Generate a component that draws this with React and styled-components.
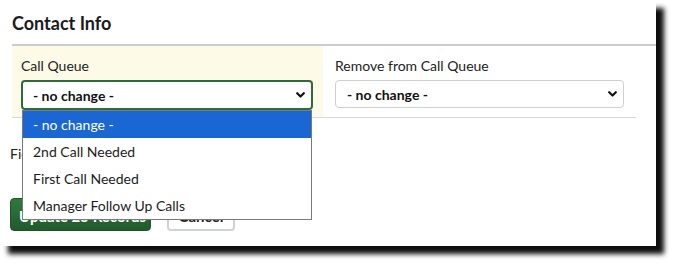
import React from 'react';
import styled, { createGlobalStyle } from 'styled-components';

const GlobalStyle = createGlobalStyle`
  html, body {
    margin: 0;
    padding: 0;
    background: #fff;
    font-family: "Lato", "Liberation Sans", sans-serif;
    color: #222;
  }
`;

const Page = styled.div`
  width: 675px;
  height: 264px;
  overflow: hidden;
  background: #fff;
`;

const Panel = styled.div`
  position: relative;
  width: 656px;
  height: 246px;
  background: #fff;
  box-shadow: 8px 8px 5px rgba(0, 0, 0, 0.95);
  box-sizing: border-box;
`;

const Header = styled.div`
  margin-left: 12px;
  height: 44px;
  border-bottom: 2px solid #c9cdd2;
  display: flex;
  align-items: center;
`;

const Title = styled.h2`
  margin: 0;
  font-size: 18px;
  font-weight: 700;
  color: #1b1b1b;
  padding-top: 2px;
`;

const FieldRow = styled.div`
  display: grid;
  grid-template-columns: 311px 313px;
  margin-left: 12px;
  width: 624px;
  border-bottom: 1px solid #d8d8d8;
`;

const Cell = styled.div`
  position: relative;
  background: ${p => (p.$active ? '#fdfbe7' : '#fff')};
  padding: 10px ${p => (p.$active ? '10px' : '12px')} 7px ${p => (p.$active ? '9px' : '12px')};
`;

const Label = styled.div`
  font-size: 14px;
  line-height: 20px;
  margin-bottom: 4px;
  color: #222;
`;

const SelectBox = styled.div`
  height: ${p => (p.$focused ? '30px' : '28px')};
  margin-top: ${p => (p.$focused ? '0' : '1px')};
  box-sizing: border-box;
  border: ${p => (p.$focused ? '2px solid #2f6a3c' : '1px solid #cfcfcf')};
  border-radius: 4px;
  background: #fff;
  display: flex;
  align-items: center;
  justify-content: space-between;
  padding: 0 6px 0 ${p => (p.$focused ? '10px' : '11px')};
  font-size: 14px;
  font-weight: 700;
  color: #111;
`;

const Chevron = () => (
  <svg width="9" height="6" viewBox="0 0 9 6">
    <path d="M1.2 1.2 L4.5 4.5 L7.8 1.2" fill="none" stroke="#111" strokeWidth="2.2" strokeLinecap="round" strokeLinejoin="round" />
  </svg>
);

const OptionList = styled.ul`
  position: absolute;
  left: 10px;
  top: 64px;
  width: 290px;
  margin: 0;
  padding: 0;
  list-style: none;
  border: 1px solid #7a7a7a;
  background: #fff;
  box-sizing: border-box;
  z-index: 5;
`;

const OptionItem = styled.li`
  height: 27px;
  line-height: 27px;
  padding-left: 10px;
  font-size: 14px;
  white-space: nowrap;
  background: ${p => (p.$selected ? '#1a66d2' : '#fff')};
  color: ${p => (p.$selected ? '#fff' : '#1c1c1c')};
`;

const Body = styled.div`
  padding: 26px 10px 0;
`;

const Note = styled.div`
  font-size: 14px;
  line-height: 20px;
  color: #222;
  white-space: nowrap;
`;

const Actions = styled.div`
  display: flex;
  gap: 16px;
  margin-top: 34px;
`;

const Button = styled.button`
  height: 33px;
  box-sizing: border-box;
  border-radius: 4px;
  font-family: inherit;
  font-size: 15px;
  font-weight: 700;
  padding: 3px 8px 0;
  white-space: nowrap;
  cursor: pointer;
  background: ${p => (p.$primary ? 'linear-gradient(#2f7a3e, #22592c)' : '#fff')};
  color: ${p => (p.$primary ? '#fff' : '#222')};
  border: ${p => (p.$primary ? '1px solid #1f5428' : '2px solid #d0d3d6')};
  width: ${p => (p.$primary ? '141px' : '68px')};
`;

const options = ['- no change -', '2nd Call Needed', 'First Call Needed', 'Manager Follow Up Calls'];

export default function App() {
  return (
    <Page>
      <GlobalStyle />
      <Panel>
        <Header>
          <Title>Contact Info</Title>
        </Header>
        <FieldRow>
          <Cell $active>
            <Label>Call Queue</Label>
            <SelectBox $focused>
              <span>- no change -</span>
              <Chevron />
            </SelectBox>
            <OptionList>
              {options.map((o, i) => (
                <OptionItem key={o} $selected={i === 0}>{o}</OptionItem>
              ))}
            </OptionList>
          </Cell>
          <Cell>
            <Label>Remove from Call Queue</Label>
            <SelectBox>
              <span>- no change -</span>
              <Chevron />
            </SelectBox>
          </Cell>
        </FieldRow>
        <Body>
          <Note>Fields not changed will be left as they are.</Note>
          <Actions>
            <Button $primary>Update 25 Records</Button>
            <Button>Cancel</Button>
          </Actions>
        </Body>
      </Panel>
    </Page>
  );
}
